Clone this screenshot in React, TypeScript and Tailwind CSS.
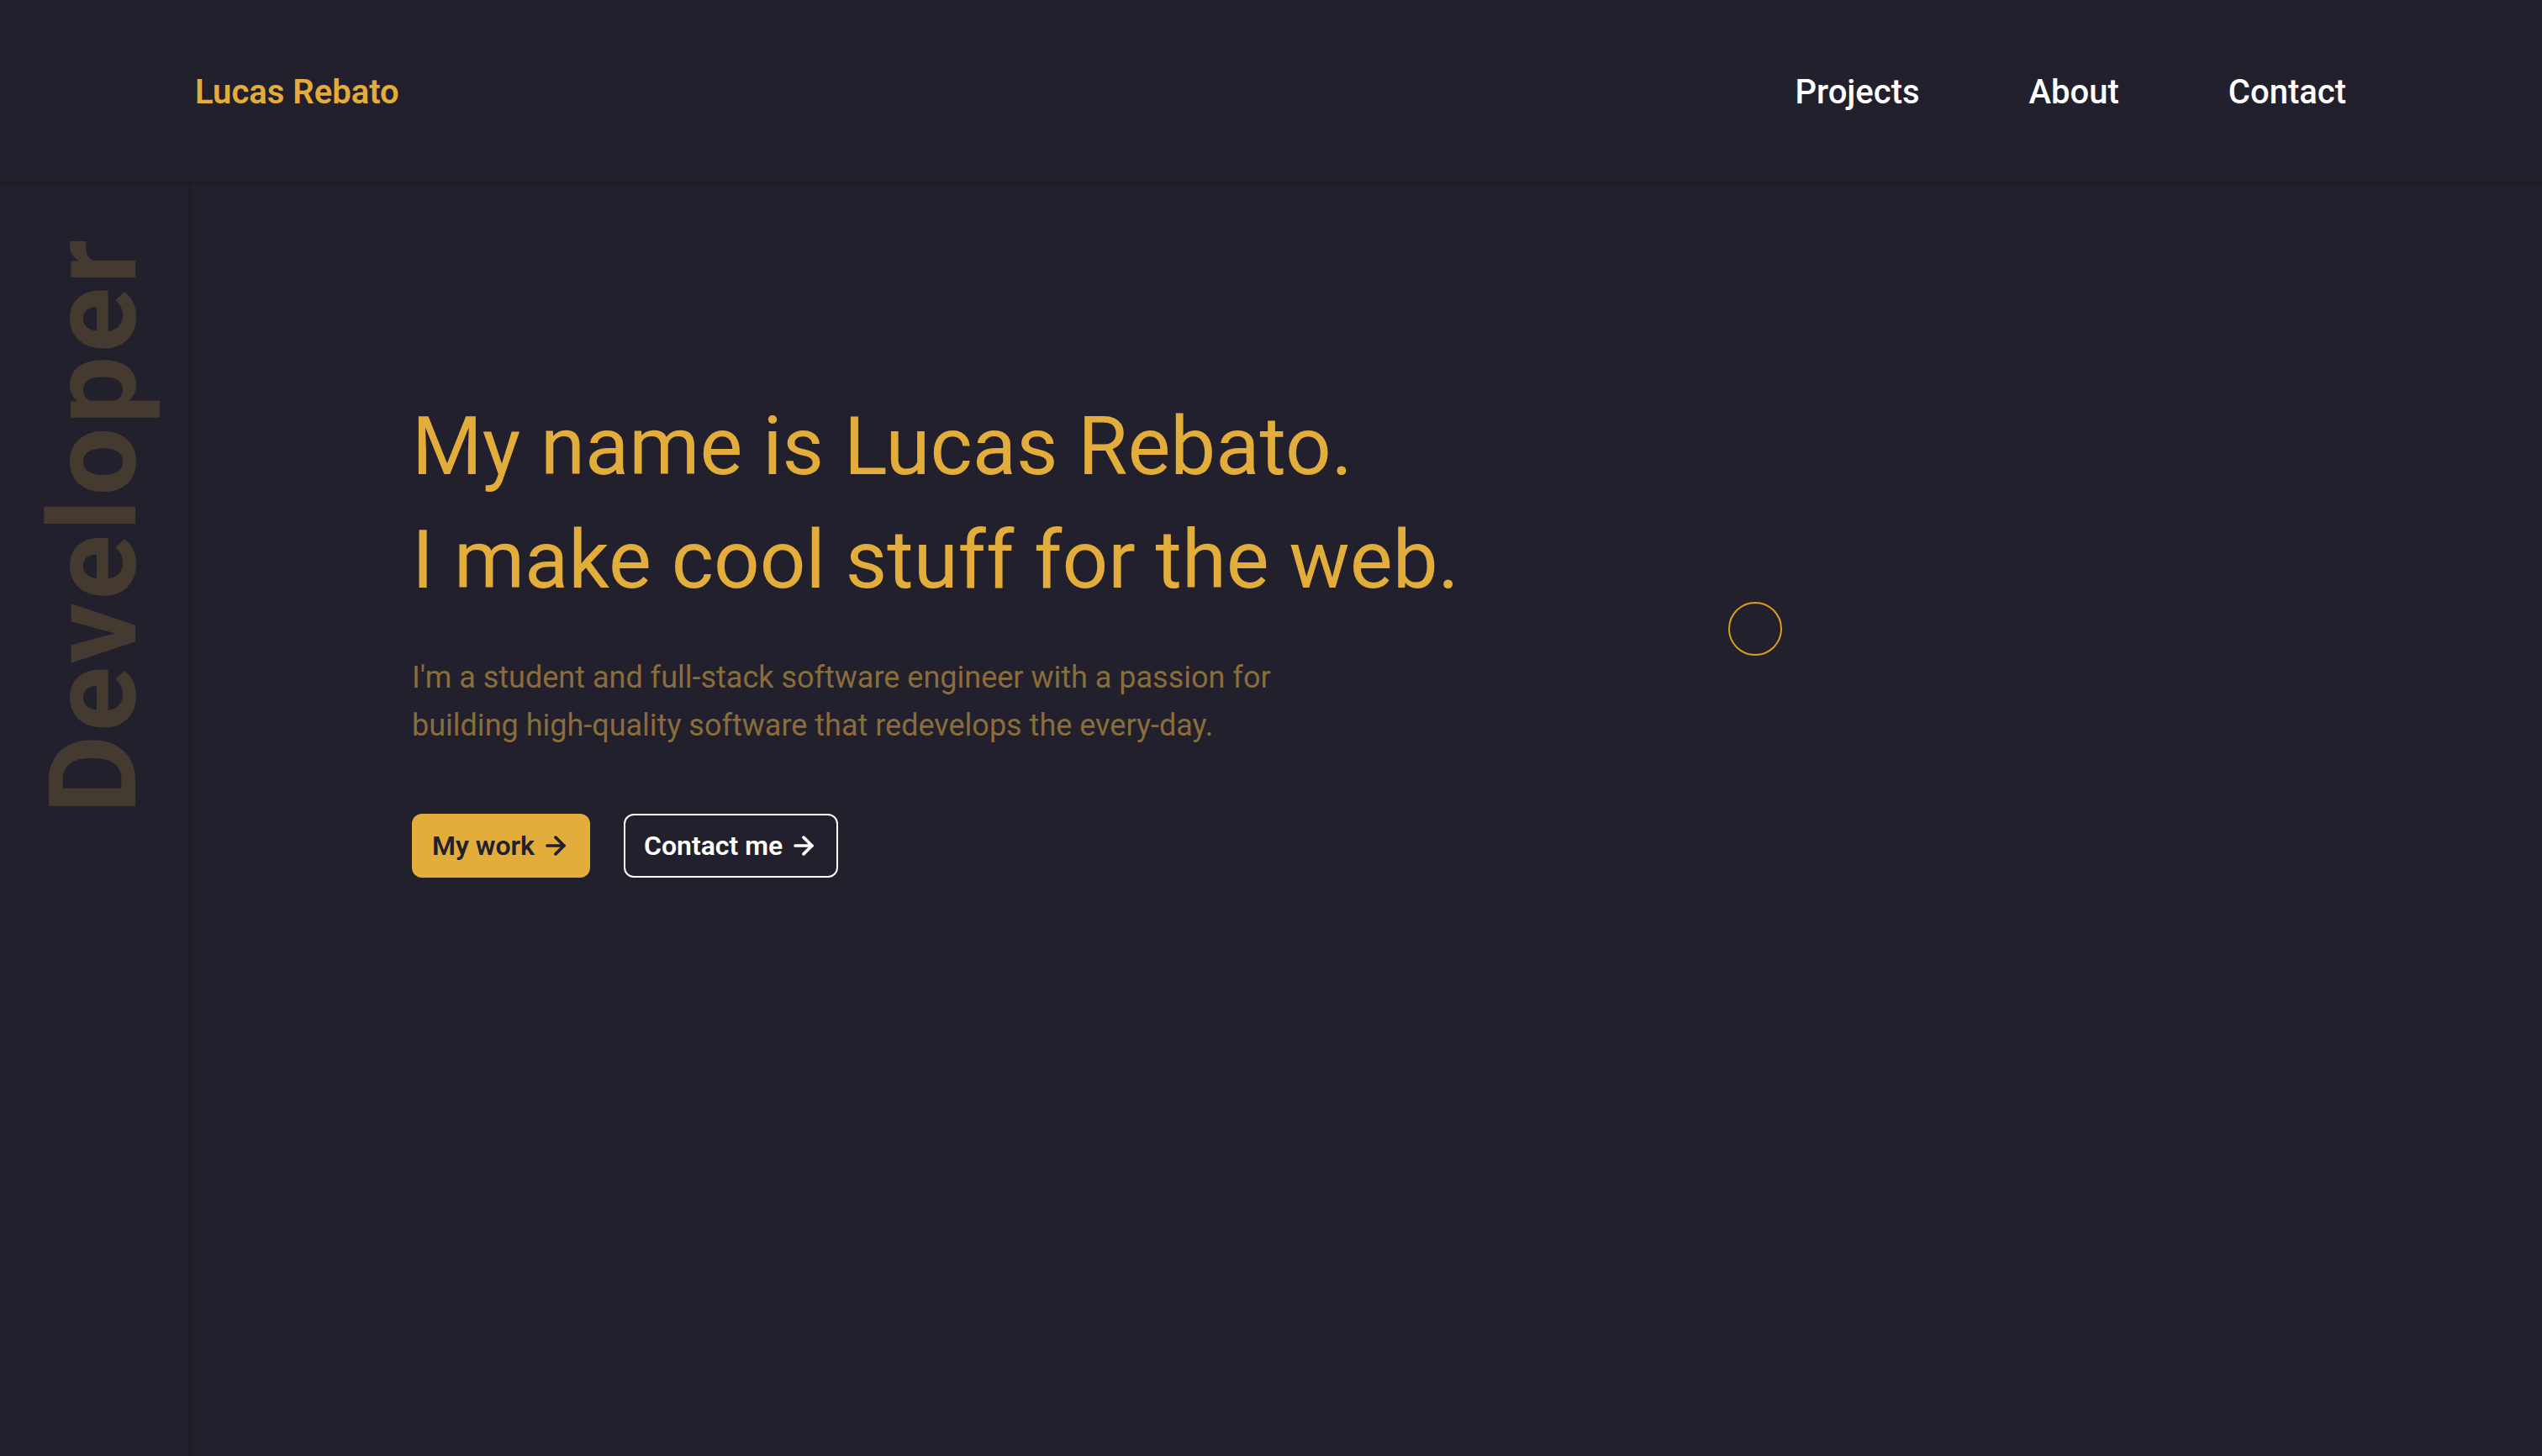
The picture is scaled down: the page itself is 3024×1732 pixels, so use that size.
import { ArrowRight } from "lucide-react";

const navLinks = ["Projects", "About", "Contact"];

function Header() {
    return (
        <header className="flex h-[219px] items-center justify-between border-b-[3px] border-[#1d1c27] pl-[232px] pr-[233px] pt-[3px]">
            <a href="#" className="text-[40px] font-semibold text-[#e2ad3b]">Lucas Rebato</a>
            <nav className="flex items-center gap-[130px]">
                {navLinks.map((link) => (
                    <a key={link} href="#" className="text-[40px] font-medium text-white">
                        {link}
                    </a>
                ))}
            </nav>
        </header>
    );
}

function Sidebar() {
    return (
        <aside className="flex w-[228px] shrink-0 flex-col items-center border-r-[4px] border-[#1e1d28] pt-[62px]">
            <span className="rotate-180 text-[144px] font-bold leading-none tracking-[4px] text-[#453a2f] [writing-mode:vertical-rl]">
                Developer
            </span>
        </aside>
    );
}

function Hero() {
    return (
        <section className="flex-1 pl-[262px] pt-[245px]">
            <h1 className="text-[96px] font-normal leading-[135px] text-[#e2ad3b]">
                My name is Lucas Rebato.
                <br />
                I make cool stuff for the web.
            </h1>
            <p className="mt-11 max-w-[1100px] text-[36px] leading-[57px] text-[#8a6d3a]">
                I'm a student and full-stack software engineer with a passion for building high-quality software that redevelops the every-day.
            </p>
            <div className="mt-[76px] flex items-center gap-10">
                <a href="#" className="flex h-[76px] items-center gap-2 rounded-xl bg-[#e2ad3b] px-[24px] text-[32px] font-semibold text-[#22202d]">
                    My work <ArrowRight size={34} strokeWidth={2.6} />
                </a>
                <a href="#" className="flex h-[76px] items-center gap-2 rounded-xl border-2 border-white px-[22px] text-[32px] font-semibold text-white">
                    Contact me <ArrowRight size={34} strokeWidth={2.6} />
                </a>
            </div>
        </section>
    );
}

export default function App() {
    return (
        <div className="relative flex h-[1732px] flex-col overflow-hidden bg-[#22202d] font-['Roboto',sans-serif]">
            <Header />
            <div className="flex flex-1">
                <Sidebar />
                <Hero />
            </div>
            {/* cursor follower */}
            <div className="pointer-events-none absolute left-[2056px] top-[716px] h-[64px] w-[64px] rounded-full border-2 border-[#d69f1e]" />
        </div>
    );
}
